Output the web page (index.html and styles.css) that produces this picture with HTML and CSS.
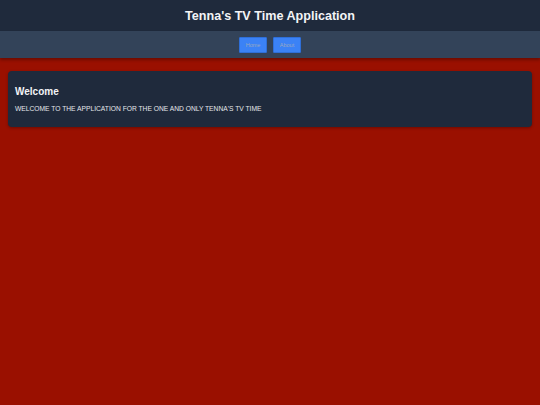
FILE: index.html
```html
<!DOCTYPE html>
<html lang="en">
<head>
    <meta charset="UTF-8">
    <meta name="viewport" content="width=device-width, initial-scale=1.0">
    <title>Tenna's TV Time Application</title>
    <link rel="stylesheet" href="styles.css">
</head>
<body>
    <header class="site-header">
        <h1>Tenna's TV Time Application</h1>
    </header>
    <nav class="site-nav">
        <button class="nav-button">Home</button>
        <button class="nav-button">About</button>
    </nav>
    <main class="content">
        <section class="card">
            <h2>Welcome</h2>
            <p>WELCOME TO THE APPLICATION FOR THE ONE AND ONLY TENNA'S TV TIME</p>
        </section>
    </main>
</body>
</html>
```

FILE: styles.css
```css
body {
    font-family: "Liberation Sans", Arial, sans-serif;
    background-color: #9a1000;
    margin: 0;
    padding: 0;
    color: #fff;
}
.site-header {
    background-color: #1f2a3c;
    height: 31px;
    display: flex;
    align-items: center;
    justify-content: center;
}
.site-header h1 {
    margin: 0;
    font-size: 12.6px;
    font-weight: bold;
    color: #f3f4f6;
}
.site-nav {
    background-color: #334359;
    height: 27px;
    display: flex;
    align-items: center;
    justify-content: center;
    gap: 6px;
    box-shadow: 0 2px 3px rgba(0, 0, 0, 0.3);
}
.nav-button {
    width: 28px;
    height: 16px;
    padding: 0;
    background-color: #3b82f6;
    color: #9aa8bf;
    border: 1px solid #2f6fd8;
    border-radius: 1px;
    font-family: "Liberation Sans", Arial, sans-serif;
    font-size: 5.5px;
    cursor: pointer;
}
.content {
    padding: 13px 8px;
}
.card {
    background-color: #1f2a3c;
    border-radius: 4px;
    padding: 15px 7px 15px;
    box-shadow: 0 1px 3px rgba(0, 0, 0, 0.3);
}
.card h2 {
    margin: 0 0 8px;
    font-size: 10px;
    font-weight: bold;
    color: #f3f4f6;
}
.card p {
    margin: 0;
    font-size: 6.7px;
    color: #e5e7eb;
}
```
